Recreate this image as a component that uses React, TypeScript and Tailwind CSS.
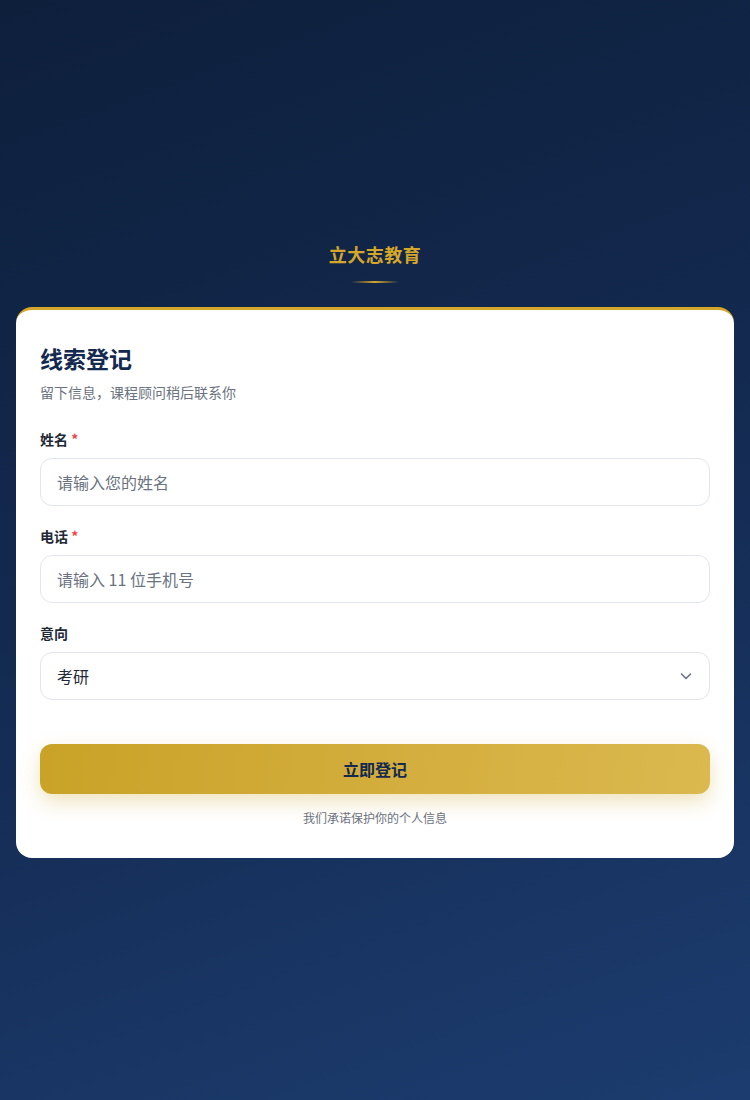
import React from "react";

const font = '"Noto Sans CJK SC", "Noto Sans", Inter, sans-serif';

export default function App() {
  return (
    <div
      className="min-h-screen w-full flex flex-col items-center justify-center px-4 py-10 bg-[linear-gradient(160deg,#0d1f3b_0%,#13294f_45%,#1c3c6f_100%)]"
      style={{ fontFamily: font }}
    >
      <div className="flex flex-col items-center mb-6">
        <div className="text-[18px] font-bold leading-[24px] tracking-[0.5px] text-[#d4a62a]">立大志教育</div>
        <div className="mt-[15px] h-[2px] w-[48px] bg-[linear-gradient(90deg,transparent,#d4a62a,transparent)]" />
      </div>

      <div className="w-full rounded-[16px] bg-white border-t-[3px] border-[#d4a62a] px-6 pt-[32px] pb-[32px]">
        <h1 className="text-[23px] font-bold leading-[32px] text-[#13294f]">线索登记</h1>
        <p className="mt-[8px] text-[14px] leading-[20px] text-[#6b7280]">留下信息，课程顾问稍后联系你</p>

        <div className="mt-[27px] flex flex-col gap-[20px]">
          <div>
            <label className="block text-[14px] font-bold leading-[21px] text-[#1f2937]">
              姓名 <span className="text-[#ef4444]">*</span>
            </label>
            <input
              className="mt-[8px] h-[48px] w-full rounded-[12px] border border-[#e3e5ee] px-4 text-[16px] text-[#1f2937] placeholder:text-[#6b7280] outline-none"
              placeholder="请输入您的姓名"
            />
          </div>
          <div>
            <label className="block text-[14px] font-bold leading-[21px] text-[#1f2937]">
              电话 <span className="text-[#ef4444]">*</span>
            </label>
            <input
              className="mt-[8px] h-[48px] w-full rounded-[12px] border border-[#e3e5ee] px-4 text-[16px] text-[#1f2937] placeholder:text-[#6b7280] outline-none"
              placeholder="请输入 11 位手机号"
            />
          </div>
          <div>
            <label className="block text-[14px] font-bold leading-[21px] text-[#1f2937]">意向</label>
            <div className="relative mt-[8px]">
              <div className="h-[48px] w-full rounded-[12px] border border-[#e3e5ee] px-4 flex items-center text-[16px] text-[#1f2937]">
                考研
              </div>
              <svg
                className="absolute right-[17px] top-1/2 -translate-y-1/2"
                width="14"
                height="14"
                viewBox="0 0 14 14"
                fill="none"
                stroke="#6b7280"
                strokeWidth="1.6"
                strokeLinecap="round"
                strokeLinejoin="round"
              >
                <path d="M2.5 5 L7 9.5 L11.5 5" />
              </svg>
            </div>
          </div>
        </div>

        <button className="mt-[44px] h-[50px] w-full rounded-[12px] bg-[linear-gradient(100deg,#c9a227_0%,#d4ae3e_55%,#dbb94f_100%)] text-[16px] font-bold text-[#13294f] shadow-[0_8px_20px_rgba(201,162,39,0.3)]">
          立即登记
        </button>
        <p className="mt-[16px] text-center text-[12px] leading-[16px] text-[#6b7280]">我们承诺保护你的个人信息</p>
      </div>
    </div>
  );
}
